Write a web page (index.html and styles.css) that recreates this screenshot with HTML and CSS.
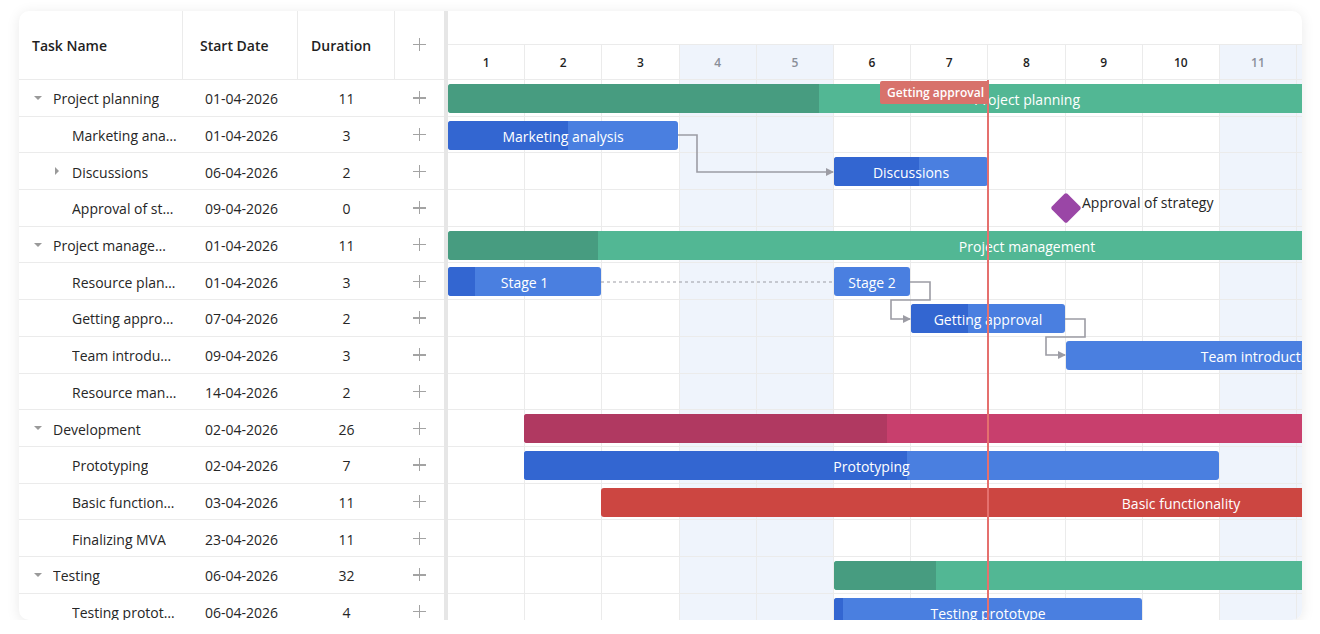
FILE: index.html
```html
<!DOCTYPE html>
<html lang="en">

<head>
    <meta charset="UTF-8">
    <meta name="viewport" content="width=device-width, initial-scale=1.0">
    <title>Project Gantt</title>

    <link rel="stylesheet" href="styles.css">
</head>

<body>
    <div class="gantt">
        <!-- left grid -->
        <div class="grid">
            <div class="grid-head">
                <div class="col col-name">Task Name</div>
                <div class="col col-start">Start Date</div>
                <div class="col col-dur">Duration</div>
                <div class="col col-add"><span class="plus"></span></div>
            </div>
            <div class="grid-body">
                <div class="row">
                    <div class="cell col-name"><span class="toggle open"></span><span class="name">Project planning</span></div>
                    <div class="cell col-start">01-04-2026</div>
                    <div class="cell col-dur">11</div>
                    <div class="cell col-add"><span class="plus"></span></div>
                </div>
                <div class="row">
                    <div class="cell col-name lvl1"><span class="toggle"></span><span class="name">Marketing analysis</span></div>
                    <div class="cell col-start">01-04-2026</div>
                    <div class="cell col-dur">3</div>
                    <div class="cell col-add"><span class="plus"></span></div>
                </div>
                <div class="row">
                    <div class="cell col-name lvl1"><span class="toggle closed"></span><span class="name">Discussions</span></div>
                    <div class="cell col-start">06-04-2026</div>
                    <div class="cell col-dur">2</div>
                    <div class="cell col-add"><span class="plus"></span></div>
                </div>
                <div class="row">
                    <div class="cell col-name lvl1"><span class="toggle"></span><span class="name">Approval of strategy</span></div>
                    <div class="cell col-start">09-04-2026</div>
                    <div class="cell col-dur">0</div>
                    <div class="cell col-add"><span class="plus"></span></div>
                </div>
                <div class="row">
                    <div class="cell col-name"><span class="toggle open"></span><span class="name">Project management</span></div>
                    <div class="cell col-start">01-04-2026</div>
                    <div class="cell col-dur">11</div>
                    <div class="cell col-add"><span class="plus"></span></div>
                </div>
                <div class="row">
                    <div class="cell col-name lvl1"><span class="toggle"></span><span class="name">Resource planning</span></div>
                    <div class="cell col-start">01-04-2026</div>
                    <div class="cell col-dur">3</div>
                    <div class="cell col-add"><span class="plus"></span></div>
                </div>
                <div class="row">
                    <div class="cell col-name lvl1"><span class="toggle"></span><span class="name">Getting approval</span></div>
                    <div class="cell col-start">07-04-2026</div>
                    <div class="cell col-dur">2</div>
                    <div class="cell col-add"><span class="plus"></span></div>
                </div>
                <div class="row">
                    <div class="cell col-name lvl1"><span class="toggle"></span><span class="name">Team introduction</span></div>
                    <div class="cell col-start">09-04-2026</div>
                    <div class="cell col-dur">3</div>
                    <div class="cell col-add"><span class="plus"></span></div>
                </div>
                <div class="row">
                    <div class="cell col-name lvl1"><span class="toggle"></span><span class="name">Resource management</span></div>
                    <div class="cell col-start">14-04-2026</div>
                    <div class="cell col-dur">2</div>
                    <div class="cell col-add"><span class="plus"></span></div>
                </div>
                <div class="row">
                    <div class="cell col-name"><span class="toggle open"></span><span class="name">Development</span></div>
                    <div class="cell col-start">02-04-2026</div>
                    <div class="cell col-dur">26</div>
                    <div class="cell col-add"><span class="plus"></span></div>
                </div>
                <div class="row">
                    <div class="cell col-name lvl1"><span class="toggle"></span><span class="name">Prototyping</span></div>
                    <div class="cell col-start">02-04-2026</div>
                    <div class="cell col-dur">7</div>
                    <div class="cell col-add"><span class="plus"></span></div>
                </div>
                <div class="row">
                    <div class="cell col-name lvl1"><span class="toggle"></span><span class="name">Basic functionality</span></div>
                    <div class="cell col-start">03-04-2026</div>
                    <div class="cell col-dur">11</div>
                    <div class="cell col-add"><span class="plus"></span></div>
                </div>
                <div class="row">
                    <div class="cell col-name lvl1"><span class="toggle"></span><span class="name">Finalizing MVA</span></div>
                    <div class="cell col-start">23-04-2026</div>
                    <div class="cell col-dur">11</div>
                    <div class="cell col-add"><span class="plus"></span></div>
                </div>
                <div class="row">
                    <div class="cell col-name"><span class="toggle open"></span><span class="name">Testing</span></div>
                    <div class="cell col-start">06-04-2026</div>
                    <div class="cell col-dur">32</div>
                    <div class="cell col-add"><span class="plus"></span></div>
                </div>
                <div class="row">
                    <div class="cell col-name lvl1"><span class="toggle"></span><span class="name">Testing prototype</span></div>
                    <div class="cell col-start">06-04-2026</div>
                    <div class="cell col-dur">4</div>
                    <div class="cell col-add"><span class="plus"></span></div>
                </div>
            </div>
        </div>

        <div class="resizer"></div>

        <!-- timeline -->
        <div class="chart">
            <div class="scale">
                <div class="scale-top"></div>
                <div class="scale-days">
                    <div class="day">1</div>
                    <div class="day">2</div>
                    <div class="day">3</div>
                    <div class="day weekend">4</div>
                    <div class="day weekend">5</div>
                    <div class="day">6</div>
                    <div class="day">7</div>
                    <div class="day">8</div>
                    <div class="day">9</div>
                    <div class="day">10</div>
                    <div class="day weekend">11</div>
                    <div class="day weekend">12</div>
                </div>
            </div>

            <div class="chart-body">
                <div class="columns">
                    <div class="column"></div>
                    <div class="column"></div>
                    <div class="column"></div>
                    <div class="column weekend"></div>
                    <div class="column weekend"></div>
                    <div class="column"></div>
                    <div class="column"></div>
                    <div class="column"></div>
                    <div class="column"></div>
                    <div class="column"></div>
                    <div class="column weekend"></div>
                    <div class="column weekend"></div>
                </div>

                <div class="track">
                    <div class="bar bar-green" style="left:0;width:1158px"><div class="progress" style="width:371px"></div><span class="label">Project planning</span></div>
                </div>
                <div class="track">
                    <div class="bar bar-blue" style="left:0;width:230px"><div class="progress" style="width:120px"></div><span class="label">Marketing analysis</span></div>
                </div>
                <div class="track">
                    <div class="bar bar-blue" style="left:386px;width:154px"><div class="progress" style="width:85px"></div><span class="label">Discussions</span></div>
                </div>
                <div class="track">
                    <div class="milestone" style="left:607px"></div>
                    <span class="milestone-label" style="left:634px">Approval of strategy</span>
                </div>
                <div class="track">
                    <div class="bar bar-green" style="left:0;width:1158px"><div class="progress" style="width:150px"></div><span class="label">Project management</span></div>
                </div>
                <div class="track">
                    <div class="bar bar-blue" style="left:0;width:153px"><div class="progress" style="width:27px"></div><span class="label">Stage 1</span></div>
                    <div class="bar bar-blue" style="left:386px;width:76px"><span class="label">Stage 2</span></div>
                </div>
                <div class="track">
                    <div class="bar bar-blue" style="left:463px;width:154px"><div class="progress" style="width:57px"></div><span class="label">Getting approval</span></div>
                </div>
                <div class="track">
                    <div class="bar bar-blue" style="left:618px;width:390px"><span class="label">Team introduction</span></div>
                </div>
                <div class="track"></div>
                <div class="track">
                    <div class="bar bar-pink" style="left:76px;width:2000px"><div class="progress" style="width:363px"></div><span class="label">Development</span></div>
                </div>
                <div class="track">
                    <div class="bar bar-blue" style="left:76px;width:695px"><div class="progress" style="width:383px"></div><span class="label">Prototyping</span></div>
                </div>
                <div class="track">
                    <div class="bar bar-red" style="left:153px;width:1160px"><span class="label">Basic functionality</span></div>
                </div>
                <div class="track"></div>
                <div class="track">
                    <div class="bar bar-green" style="left:386px;width:2400px"><div class="progress" style="width:102px"></div><span class="label">Testing</span></div>
                </div>
                <div class="track">
                    <div class="bar bar-blue" style="left:386px;width:308px"><div class="progress" style="width:9px"></div><span class="label">Testing prototype</span></div>
                </div>

                <svg class="links" width="854" height="560" viewBox="0 0 854 560">
                    <defs>
                        <marker id="arrow" markerWidth="8" markerHeight="8" refX="7" refY="4" orient="auto" markerUnits="userSpaceOnUse">
                            <path d="M0 0 L8 4 L0 8 Z"/>
                        </marker>
                    </defs>
                    <path d="M230 55 H249 V92 H385" marker-end="url(#arrow)"/>
                    <path d="M153 202 H386" class="dashed"/>
                    <path d="M462 202 H482 V220 H443 V239 H462" marker-end="url(#arrow)"/>
                    <path d="M617 239 H637 V257 H598 V275 H617" marker-end="url(#arrow)"/>
                </svg>

                <div class="today">
                    <span class="today-label">Getting approval</span>
                </div>
            </div>
        </div>
    </div>
</body>

</html>
```

FILE: styles.css
```css
html {
    height: 100%;
}

body {
    margin: 0;
    padding: 11px 18px 0 19px;
    font-family: "Open Sans", sans-serif;
    font-size: 14px;
    color: #262626;
    background: #fff;
}

.gantt {
    display: flex;
    height: 609px;
    background: #fff;
    border-radius: 10px;
    overflow: hidden;
    box-shadow: 0 2px 14px rgba(0, 0, 0, 0.09);
}

/* grid */

.grid {
    width: 425px;
    flex-shrink: 0;
}

.grid-head {
    display: flex;
    height: 69px;
    border-bottom: 1px solid #ebebeb;
    box-sizing: border-box;
    font-weight: 600;
    color: #1f1f1f;
}

.grid-head .col {
    display: flex;
    align-items: center;
    border-right: 1px solid #ebebeb;
    box-sizing: border-box;
}

.grid-head .col-name {
    padding-left: 13px;
}

.grid-head .col-start {
    padding-left: 17px;
}

.grid-head .col-dur {
    padding-left: 13px;
}

.grid-head .col-add {
    justify-content: center;
    border-right: none;
}

.col-name {
    width: 164px;
}

.col-start {
    width: 115px;
}

.col-dur {
    width: 97px;
}

.col-add {
    width: 49px;
}

.row {
    display: flex;
    height: 36.7px;
    border-bottom: 1px solid #ebebeb;
    box-sizing: border-box;
}

.cell {
    display: flex;
    align-items: center;
    padding-top: 2px;
    box-sizing: border-box;
    white-space: nowrap;
    color: #262626;
}

.cell.col-name {
    padding: 2px 6px 0 11px;
}

.cell.col-name.lvl1 {
    padding-left: 30px;
}

.cell.col-start {
    padding-left: 22px;
}

.cell.col-dur,
.cell.col-add {
    justify-content: center;
}

.name {
    overflow: hidden;
    text-overflow: ellipsis;
}

.toggle {
    position: relative;
    flex: 0 0 16px;
    height: 16px;
    margin-right: 7px;
}

.toggle.open::after {
    content: "";
    position: absolute;
    left: 4px;
    top: 5px;
    border-left: 4px solid transparent;
    border-right: 4px solid transparent;
    border-top: 4px solid #9a9a9a;
}

.toggle.closed::after {
    content: "";
    position: absolute;
    left: 6px;
    top: 3px;
    border-top: 4px solid transparent;
    border-bottom: 4px solid transparent;
    border-left: 4px solid #9a9a9a;
}

.plus {
    position: relative;
    width: 13px;
    height: 13px;
    margin-top: -2px;
}

.plus::before,
.plus::after {
    content: "";
    position: absolute;
    background: #a3a3a3;
}

.plus::before {
    left: 6px;
    top: 0;
    width: 1.4px;
    height: 13px;
}

.plus::after {
    top: 6px;
    left: 0;
    width: 13px;
    height: 1.4px;
}

.resizer {
    width: 4px;
    flex-shrink: 0;
    background: #e6e6e6;
}

/* timeline */

.chart {
    flex: 1;
    overflow: hidden;
    position: relative;
}

.scale-top {
    height: 34px;
    border-bottom: 1px solid #ebebeb;
    box-sizing: border-box;
}

.scale-days {
    display: flex;
    height: 35px;
    border-bottom: 1px solid #ebebeb;
    box-sizing: border-box;
}

.day {
    flex: 0 0 77.2px;
    display: flex;
    align-items: center;
    justify-content: center;
    border-right: 1px solid #ebebeb;
    box-sizing: border-box;
    font-size: 12px;
    font-weight: 600;
    color: #1f1f1f;
}

.day.weekend {
    background: #eff4fc;
    color: #8a8f99;
}

.chart-body {
    position: relative;
}

.columns {
    position: absolute;
    top: 0;
    left: 0;
    bottom: 0;
    display: flex;
}

.column {
    flex: 0 0 77.2px;
    border-right: 1px solid #ebebeb;
    box-sizing: border-box;
}

.column.weekend {
    background: #eff4fc;
}

.track {
    position: relative;
    height: 36.7px;
    border-bottom: 1px solid #ebebeb;
    box-sizing: border-box;
}

.bar {
    position: absolute;
    top: 4px;
    height: 29px;
    border-radius: 3px;
    overflow: hidden;
    color: #fff;
}

.bar .progress {
    position: absolute;
    top: 0;
    left: 0;
    bottom: 0;
}

.bar .label {
    position: relative;
    display: block;
    text-align: center;
    line-height: 31px;
    white-space: nowrap;
}

.bar-blue {
    background: #4a7fe0;
}

.bar-blue .progress {
    background: #3366d1;
}

.bar-green {
    background: #52b794;
}

.bar-green .progress {
    background: #479c80;
}

.bar-pink {
    background: #c83f6d;
}

.bar-pink .progress {
    background: #b03961;
}

.bar-red {
    background: #cc4641;
}

.milestone {
    position: absolute;
    top: 7px;
    width: 22px;
    height: 22px;
    background: #9a46a6;
    border-radius: 2px;
    transform: rotate(45deg);
}

.milestone-label {
    position: absolute;
    top: 2px;
    line-height: 22px;
    color: #262626;
    white-space: nowrap;
}

.links {
    position: absolute;
    top: 0;
    left: 0;
    pointer-events: none;
}

.links path {
    fill: none;
    stroke: #9c9ca4;
    stroke-width: 1.6;
}

.links marker path {
    stroke: none;
    fill: #9c9ca4;
}

.links .dashed {
    stroke-dasharray: 3 3;
    stroke-width: 1.2;
}

.today {
    position: absolute;
    top: 0;
    bottom: 0;
    left: 539px;
    width: 2px;
    background: #e5706e;
}

.today-label {
    position: absolute;
    top: 1px;
    right: 0;
    height: 23px;
    padding: 0 5px 0 7px;
    display: flex;
    align-items: center;
    background: #d8726b;
    border-radius: 2px 0 0 2px;
    color: #fff;
    font-size: 12px;
    font-weight: 600;
    white-space: nowrap;
}
```
